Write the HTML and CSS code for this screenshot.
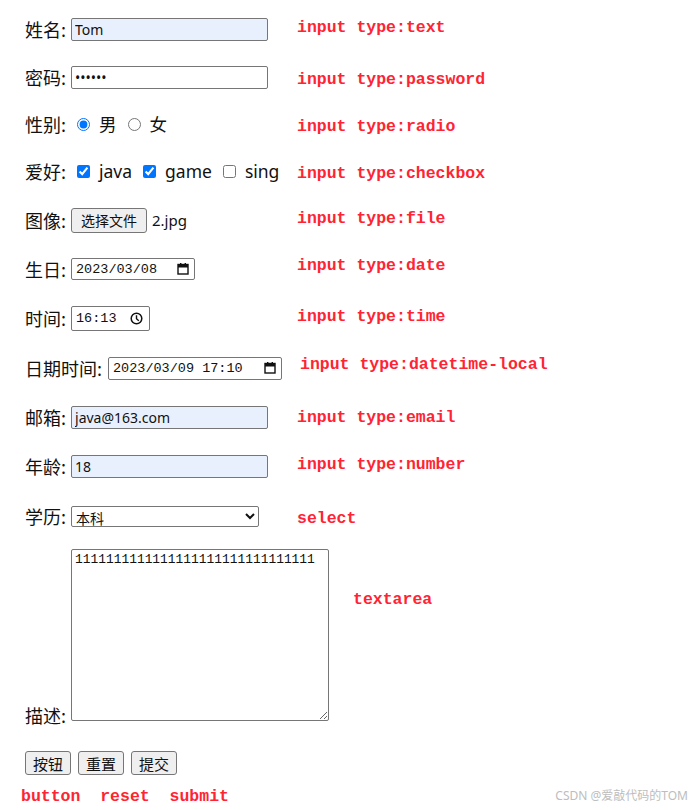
FILE: index.html
```html
<!DOCTYPE html>
<html lang="zh-CN">
<head>
  <meta charset="UTF-8">
  <meta name="viewport" content="width=device-width, initial-scale=1.0">
  <title>表单控件</title>
  <link rel="stylesheet" href="styles.css">
</head>
<body>

  <form class="form" onsubmit="return false">

    <div class="row">
      <span class="field"><span class="lbl">姓名:</span><input class="box filled" type="text" value="Tom"></span>
      <span class="note note-up">input type:text</span>
    </div>

    <div class="row">
      <span class="field"><span class="lbl">密码:</span><input class="box" type="password" value="123456"></span>
      <span class="note note-down">input type:password</span>
    </div>

    <div class="row row-short">
      <span class="field">
        <span class="lbl">性别:</span>
        <span class="choices">
          <input type="radio" name="sex" checked><span>男</span>
          <input type="radio" name="sex"><span>女</span>
        </span>
      </span>
      <span class="note note-down">input type:radio</span>
    </div>

    <div class="row">
      <span class="field">
        <span class="lbl">爱好:</span>
        <span class="choices">
          <input type="checkbox" checked><span>java</span>
          <input type="checkbox" checked><span>game</span>
          <input type="checkbox"><span>sing</span>
        </span>
      </span>
      <span class="note note-down">input type:checkbox</span>
    </div>

    <div class="row row-tall">
      <span class="field"><span class="lbl">图像:</span><span class="btn file-btn">选择文件</span><span class="file-name">2.jpg</span></span>
      <span class="note note-up">input type:file</span>
    </div>

    <div class="row">
      <span class="field">
        <span class="lbl">生日:</span>
        <span class="picker date">
          <span>2023/03/08</span>
          <svg class="ico" width="12" height="12" viewBox="0 0 12 12"><rect x="1" y="1.5" width="10" height="9.5" fill="none" stroke="#111" stroke-width="1.4"/><rect x="1" y="1.5" width="10" height="3" fill="#111"/><rect x="3" y="0" width="1.4" height="2.5" fill="#111"/><rect x="7.6" y="0" width="1.4" height="2.5" fill="#111"/></svg>
        </span>
      </span>
      <span class="note note-up2">input type:date</span>
    </div>

    <div class="row row-tall">
      <span class="field">
        <span class="lbl">时间:</span>
        <span class="picker time">
          <span>16:13</span>
          <svg class="ico" width="13" height="13" viewBox="0 0 13 13"><circle cx="6.5" cy="6.5" r="5.3" fill="none" stroke="#111" stroke-width="1.5"/><path d="M6.5 3.3v3.4l2.3 2" fill="none" stroke="#111" stroke-width="1.4"/></svg>
        </span>
      </span>
      <span class="note note-up">input type:time</span>
    </div>

    <div class="row row-tall">
      <span class="field">
        <span class="lbl">日期时间:</span>
        <span class="picker datetime">
          <span>2023/03/09 17:10</span>
          <svg class="ico" width="12" height="12" viewBox="0 0 12 12"><rect x="1" y="1.5" width="10" height="9.5" fill="none" stroke="#111" stroke-width="1.4"/><rect x="1" y="1.5" width="10" height="3" fill="#111"/><rect x="3" y="0" width="1.4" height="2.5" fill="#111"/><rect x="7.6" y="0" width="1.4" height="2.5" fill="#111"/></svg>
        </span>
      </span>
      <span class="note note-up2 note-right">input type:datetime-local</span>
    </div>

    <div class="row">
      <span class="field"><span class="lbl">邮箱:</span><input class="box filled" type="email" value="java@163.com"></span>
      <span class="note">input type:email</span>
    </div>

    <div class="row row-tall">
      <span class="field"><span class="lbl">年龄:</span><input class="box filled" type="text" value="18"></span>
      <span class="note note-up">input type:number</span>
    </div>

    <div class="row row-tall">
      <span class="field">
        <span class="lbl">学历:</span>
        <select class="select">
          <option selected>本科</option>
          <option>硕士</option>
          <option>博士</option>
        </select>
      </span>
      <span class="note note-down">select</span>
    </div>

    <div class="row-area">
      <span class="lbl lbl-area">描述:</span>
      <textarea class="area">1111111111111111111111111111111</textarea>
      <span class="note note-area">textarea</span>
    </div>

    <div class="actions">
      <button type="button" class="btn">按钮</button>
      <button type="reset" class="btn">重置</button>
      <button type="submit" class="btn">提交</button>
    </div>
    <div class="note note-actions">button  reset  submit</div>

  </form>

  <div class="watermark">CSDN @爱敲代码的TOM</div>

</body>
</html>
```

FILE: styles.css
```css
* {
  box-sizing: border-box;
}

body {
  margin: 0;
  padding: 5px 0 0 25px;
  font-family: "Noto Sans", "Noto Sans CJK SC", sans-serif;
  color: #111;
  background: #fff;
  height: 810px;
  overflow: hidden;
  position: relative;
}

.row {
  display: grid;
  grid-template-columns: 272px auto;
  align-items: center;
  height: 48px;
}

.row-short {
  height: 46px;
}

.row-tall {
  height: 50px;
}

.field {
  display: flex;
  align-items: center;
  gap: 5px;
}

.lbl {
  font-family: "Noto Sans CJK SC", sans-serif;
  font-size: 18px;
  line-height: 24px;
  white-space: nowrap;
}

/* red captions */
.note {
  font-family: "Liberation Mono", monospace;
  font-weight: bold;
  font-size: 16.5px;
  color: #ff2433;
  white-space: pre;
}

.note-up {
  margin-bottom: 3px;
}

.note-up2 {
  margin-bottom: 8px;
}

.note-down {
  margin-top: 4px;
}

.note-right {
  margin-left: 3px;
}

.box {
  width: 197px;
  height: 23px;
  margin: 0;
  padding: 1px 3px;
  border: 1px solid #767676;
  border-radius: 2px;
  font-family: "Noto Sans", "Noto Sans CJK SC", sans-serif;
  font-size: 14px;
  color: #111;
  background: #fff;
  outline: none;
}

.box.filled {
  background: #e8f0fe;
}

.choices {
  display: flex;
  align-items: center;
  font-size: 17.5px;
  line-height: 24px;
}

.choices input {
  width: 13px;
  height: 13px;
  margin: 0 9px 0 11px;
}

.choices input:first-child {
  margin-left: 6px;
}

.choices span {
  font-family: "Noto Sans", "Noto Sans CJK SC", sans-serif;
}

.btn {
  display: inline-flex;
  align-items: center;
  justify-content: center;
  min-width: 46px;
  height: 24px;
  margin: 0;
  padding: 0 7px;
  border: 1px solid #767676;
  border-radius: 3px;
  background: #efefef;
  color: #111;
  font-family: "Noto Sans CJK SC", sans-serif;
  font-size: 15px;
  cursor: pointer;
}

.file-btn {
  width: 76px;
  height: 25px;
  font-size: 14px;
}

.file-name {
  font-size: 15px;
}

.picker {
  display: flex;
  align-items: center;
  justify-content: space-between;
  height: 22px;
  padding: 0 5px 0 4px;
  border: 1px solid #767676;
  border-radius: 2px;
  font-family: "Liberation Mono", monospace;
  font-size: 13.5px;
  color: #111;
}

.picker.date {
  width: 124px;
}

.picker.time {
  width: 79px;
  height: 25px;
  padding-right: 6px;
}

.picker.datetime {
  width: 174px;
  height: 23px;
  margin-left: 1px;
}

.ico {
  display: block;
}

.select {
  width: 188px;
  height: 21px;
  margin: 0;
  border: 1px solid #767676;
  border-radius: 2px;
  background: #fff;
  font-family: "Noto Sans CJK SC", sans-serif;
  font-size: 14px;
  color: #111;
}

.row-area {
  display: flex;
  align-items: flex-end;
  gap: 5px;
  margin-top: 8px;
}

.lbl-area {
  margin-bottom: -6px;
}

.area {
  width: 258px;
  height: 172px;
  margin: 0;
  padding: 2px 3px;
  border: 1px solid #767676;
  border-radius: 2px;
  font-family: "Liberation Mono", monospace;
  font-size: 12.9px;
  line-height: 16px;
  color: #111;
  resize: both;
  outline: none;
}

.note-area {
  align-self: flex-start;
  margin: 41px 0 0 19px;
}

.actions {
  display: flex;
  gap: 7px;
  margin-top: 30px;
}

.note-actions {
  margin: 12px 0 0 -4px;
  line-height: 19px;
}

.watermark {
  position: absolute;
  right: 10px;
  bottom: 6px;
  font-family: "Noto Sans", "Noto Sans CJK SC", sans-serif;
  font-size: 12px;
  color: #bdbdbd;
}
```
